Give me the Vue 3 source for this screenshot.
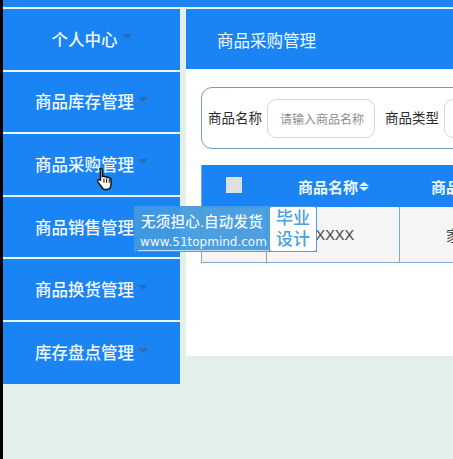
<script setup>
const menus = ['个人中心', '商品库存管理', '商品采购管理', '商品销售管理', '商品换货管理', '库存盘点管理']
</script>

<template>
  <div class="page">
    <div class="strip"></div>
    <div class="shell">
      <div class="topbar"></div>
      <div class="body">
        <aside class="side">
          <div v-for="m in menus" :key="m" class="item">
            <span>{{ m }}</span><i class="caret"></i>
          </div>
        </aside>
        <main class="main">
          <header class="head">商品采购管理</header>
          <div class="panel">
            <div class="search">
              <label>商品名称</label>
              <div class="input">请输入商品名称</div>
              <label class="second">商品类型</label>
              <div class="input short"></div>
            </div>
            <div class="table">
              <div class="row th">
                <div class="c0"><span class="check"></span></div>
                <div class="c1">商品名称<span class="sort"><i class="up"></i><i class="down"></i></span></div>
                <div class="c2">商品</div>
              </div>
              <div class="row td">
                <div class="c0"></div>
                <div class="c1">XXXXX</div>
                <div class="c2">家</div>
              </div>
            </div>
          </div>
        </main>
      </div>
    </div>

    <div class="mark">
      <div class="mark-text">
        <div class="m1">无须担心.自动发货</div>
        <div class="m2">www.51topmind.com</div>
      </div>
      <div class="mark-box">毕业<br />设计</div>
    </div>

    <svg class="hand" width="18" height="25" viewBox="0 0 16 24">
      <path d="M4 1.500c1 0 1.600.7 1.600 1.700v6l.9-.3c.8-.2 1.400 0 1.700.6.7-.4 1.600-.2 2 .6.8-.4 1.700-.1 2.100.7.7-.2 1.500.2 1.500 1.200v4.500c0 2.500-1.500 4.500-3.500 5H7c-1.300-.7-2.300-2.300-3.300-3.800L1.300 14.500c-.7-1-.4-2 .4-2.400.8-.3 1.400 0 2 .6V3.200C2.400 2.200 3 1.500 4 1.500z" fill="#fff" stroke="#111" stroke-width="1.400" stroke-linejoin="round" />
      <path d="M7 11v4M9.500 11v4M12 11.500V15" stroke="#111" stroke-width="1" fill="none" />
    </svg>
  </div>
</template>

<style scoped>
.page { position: relative; width: 453px; height: 459px; overflow: hidden; background: #e3f0ea; display: flex;
  font-family: "Liberation Sans", "Noto Sans CJK SC", sans-serif; }
.strip { width: 3px; background: #000; flex: none; }
.shell { flex: 1; min-width: 0; display: flex; flex-direction: column; }
.topbar { height: 7px; background: #1a84f5; flex: none; }
.body { display: flex; padding-top: 2px; gap: 6px; background: linear-gradient(#e9f6fb 0 2px, transparent 2px); }
.side { width: 177px; flex: none; display: flex; flex-direction: column; background: #eaf6fb; align-self: flex-start; }
.item { height: 60.6px; box-sizing: border-box; padding-bottom: 1px; background: #1a84f5; color: #f2f9ff; font-size: 16.5px; font-weight: 500; display: flex; align-items: center; justify-content: center; gap: 4px; margin-bottom: 2px; }
.item:last-child { margin-bottom: 0; height: 62px; }
.caret { width: 0; height: 0; border: 5px solid transparent; border-top: 5px solid #2a6db5; border-bottom: 0; margin-top: -4px; }
.main { flex: 1; min-width: 0; height: 347px; background: #fff; overflow: hidden; }
.head { height: 60px; background: #1a84f5; color: #f2f9ff; font-size: 16.5px; padding-left: 31px; display: flex; align-items: center; padding-top: 1px; box-sizing: border-box; }
.panel { padding: 18px 0 0 15px; width: 400px; }
.search { height: 62px; box-sizing: border-box; border: 1px solid #6c9fc9; border-radius: 11px; display: flex; align-items: center; padding-left: 6px; color: #2d2d2d; font-size: 13.5px; }
.search label { white-space: nowrap; flex: none; margin-top: -2px; }
.input { width: 108px; height: 39px; flex: none; box-sizing: border-box; border: 1px solid #d6d6d6; border-radius: 9px; margin-left: 5px; padding-left: 12px; display: flex; align-items: center; color: #8d8d8d; font-size: 12px; }
.search .second { margin-left: 10px; }
.table { margin-top: 16px; border-left: 1px solid #7da9cf; width: 400px; }
.row { display: flex; }
.th { height: 42px; background: #1a84f5; color: #eef7ff; font-weight: 700; font-size: 15px; }
.td { height: 56px; background: #f5f5f5; color: #444; font-size: 14.5px; border-bottom: 1px solid #7da9cf; box-sizing: border-box; }
.row > div { display: flex; align-items: center; justify-content: center; box-sizing: border-box; flex: none; }
.c0 { width: 65px; }
.c1 { width: 133px; }
.c2 { width: 200px; justify-content: flex-start !important; padding-left: 32px; }
.th .c2 { padding-left: 31px; }
.td .c0, .td .c1 { border-right: 1px solid #7da9cf; }
.td .c2 { padding-left: 46px; }
.td .c1 { padding-right: 6px; }
.check { width: 16px; height: 16px; background: #dcdfe4; margin-top: -2px; margin-right: 1px; }
.sort { display: inline-flex; flex-direction: column; gap: 1px; margin-left: 1px; }
.sort i { width: 0; height: 0; border: 5px solid transparent; display: block; }
.sort .up { border-bottom: 4px solid #eef7ff; border-top: 0; }
.sort .down { border-top: 4px solid #eef7ff; border-bottom: 0; }
.mark { position: absolute; left: 134px; top: 206px; width: 183px; height: 46px; display: flex; background: rgba(66, 153, 222, .94); }
.mark-text { width: 136px; flex: none; color: #f4f9fd; text-align: center; white-space: nowrap; }
.m1 { font-size: 14.5px; line-height: 20px; margin-top: 6px; letter-spacing: .2px; font-weight: 500; }
.m2 { line-height: 15px; margin-top: 3px; font-family: "DejaVu Sans", sans-serif; font-size: 12px; border-bottom: 1px solid #bfe0f6; margin-left: 4px; margin-right: 1px; }
.mark-box { flex: 1; margin: 1px 1px 1px 0; background: #fff; border-radius: 2px; color: #4b9fdd; font-size: 17px; line-height: 21px; text-align: center; padding-top: 1px; font-weight: 500; }
.hand { position: absolute; left: 96px; top: 167px; }
</style>
